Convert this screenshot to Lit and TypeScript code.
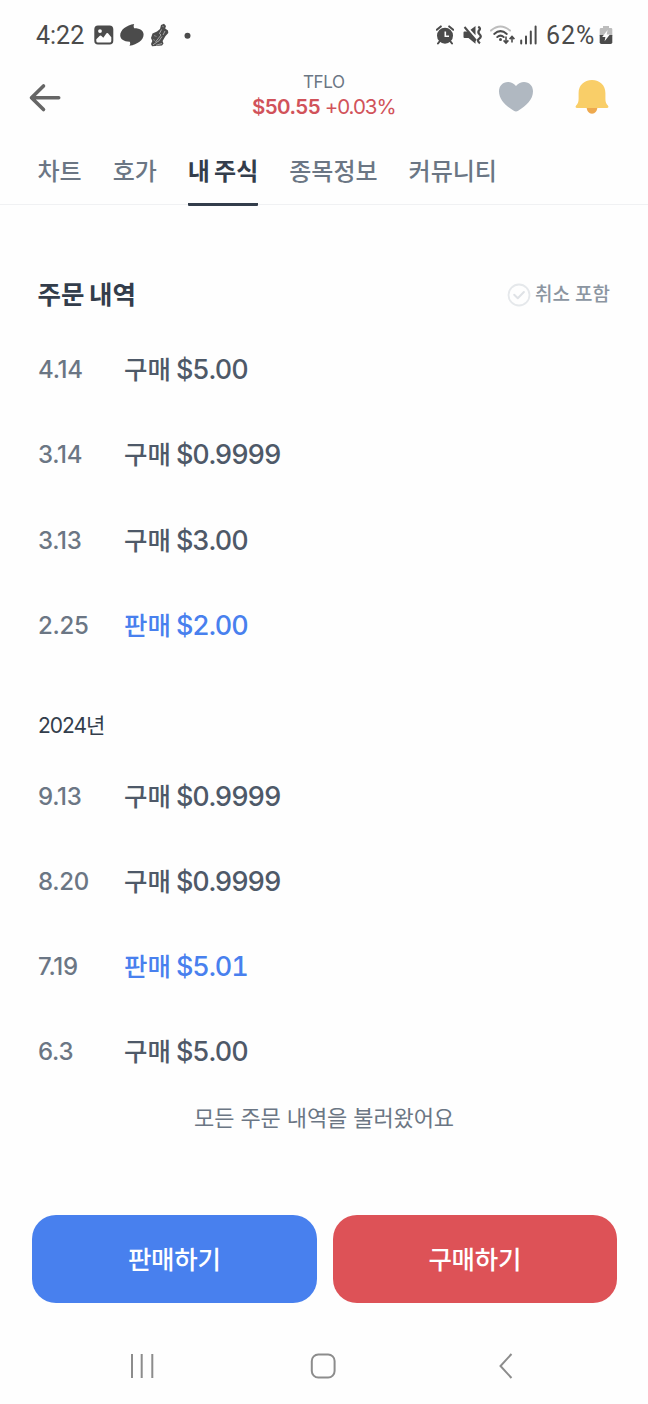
import { LitElement, html, css } from "lit";
import { customElement, property } from "lit/decorators.js";
import { classMap } from "lit/directives/class-map.js";

interface Order {
  date: string;
  side: "buy" | "sell";
  amount: string;
}

const THIS_YEAR: Order[] = [
  { date: "4.14", side: "buy", amount: "$5.00" },
  { date: "3.14", side: "buy", amount: "$0.9999" },
  { date: "3.13", side: "buy", amount: "$3.00" },
  { date: "2.25", side: "sell", amount: "$2.00" },
];

const LAST_YEAR: Order[] = [
  { date: "9.13", side: "buy", amount: "$0.9999" },
  { date: "8.20", side: "buy", amount: "$0.9999" },
  { date: "7.19", side: "sell", amount: "$5.01" },
  { date: "6.3", side: "buy", amount: "$5.00" },
];

const TABS = ["차트", "호가", "내 주식", "종목정보", "커뮤니티"];

@customElement("status-bar")
class StatusBar extends LitElement {
  static styles = css`
    :host {
      display: flex;
      justify-content: space-between;
      align-items: center;
      height: 70px;
      flex-shrink: 0;
      padding: 0 35px 0 36px;
      box-sizing: border-box;
      color: #4b4b4b;
      font: 400 25px/28px Roboto, sans-serif;
    }
    .group { display: flex; align-items: center; }
    svg { display: block; fill: #4b4b4b; flex-shrink: 0; }
    .time, .percent { padding-top: 2px; }
    .time { width: 58px; letter-spacing: 0; }
    .percent { width: 53px; letter-spacing: 0.9px; }
    .picture { margin-right: 6px; }
    .blob { margin-right: 6px; }
    .shoe { margin-right: 15px; }
    .alarm { margin-right: 9px; }
    .mute { margin-right: 8px; }
    .wifi { margin-right: 4px; }
    .signal { margin-right: 9px; }
  `;

  render() {
    return html`
      <div class="group">
        <span class="time">4:22</span>
        <svg class="picture" width="20" height="20" viewBox="0 0 20 20">
          <path fill-rule="evenodd" d="M4 .5H15.500Q19.300.5 19.300 4.300V15.700Q19.300 19.500 15.500 19.500H4Q.3 19.500.3 15.700V4.300Q.3.5 4 .5ZM2.300 14.300V16Q2.300 17.600 4 17.600H15.600Q17.300 17.600 17.300 16V12.300L14 8.300Q13.300 7.500 12.500 8.300L9.300 12.800L7.200 10.700Q6.500 10.100 5.800 10.700ZM6 4.200A1.900 1.900 0 1 0 6 8A1.900 1.900 0 1 0 6 4.200Z"/>
        </svg>
        <svg class="blob" width="24" height="24" viewBox="0 0 24 24">
          <path d="M14.200 1C13.500 2.500 13.500 4 14.200 5.200C20.500 5.200 23.600 7.800 23.600 11.500C23.600 17 17.500 21.500 9.500 22.800C10.300 21.300 10.400 19.900 9.800 18.700C3.500 18.700.2 16 .2 12.300C.2 6.800 6.500 2.200 14.200 1Z"/>
        </svg>
        <svg class="shoe" width="19" height="24" viewBox="0 0 19 24">
          <path d="M11 2L14 .7L16 3L15.200 5.500L18 7.500L18.300 10L15.500 13L12.600 18L13.500 20.500L12 22.500L2 23.200L1 21L2.300 18L1 15L2.500 10.500L7 8.500L10 6Z"/>
          <path d="M11.500 6.500L9.500 10.500L11 12L5.500 19M15 8L13 12M8.500 18.500L12 13.500M3 21.800L8.500 18M6 22.300L12 20.500" fill="none" stroke="#bdbdbd" stroke-width=".8"/>
          <path d="M4 12.500L6.500 13.500M3 16.500L5 17.500M12 3L14 4" fill="none" stroke="#8d8d8d" stroke-width=".9"/>
        </svg>
        <svg width="7" height="7" viewBox="0 0 7 7"><circle cx="3.500" cy="3.700" r="3"/></svg>
      </div>
      <div class="group">
        <svg class="alarm" width="18" height="20" viewBox="0 0 18 20">
          <path d="M.8 4.800L4.800 1.400M17.200 4.800L13.200 1.400M3.500 16.500L2 18.500M14.500 16.500L16 18.500" stroke="#4b4b4b" stroke-width="2" stroke-linecap="round"/>
          <circle cx="9" cy="10.700" r="8"/>
          <path d="M9.300 6.500V11.200H13" fill="none" stroke="#fefefe" stroke-width="1.600"/>
        </svg>
        <svg class="mute" width="19" height="20" viewBox="0 0 19 20">
          <path d="M7.500 4.700L12.500 1V10.200Z"/>
          <path d="M1.500 6.500H4.500L12.500 14.500V18.800L5.500 13H1.500Q.5 13 .5 12V7.500Q.5 6.500 1.500 6.500Z"/>
          <path d="M1.500 2L13 15.500" stroke="#4b4b4b" stroke-width="2"/>
          <path d="M15.200 1.800Q18 3.200 16.200 5.300T16.700 9.500T16.200 13.700T17 18.200" fill="none" stroke="#4b4b4b" stroke-width="2.300"/>
        </svg>
        <svg class="wifi" width="26" height="20" viewBox="0 0 26 20">
          <g fill="none" stroke="#4b4b4b" stroke-width="2" stroke-linecap="round">
            <path d="M1 5.600Q10.500-2.500 20 5.600" stroke="#bdbdbd"/>
            <path d="M4.200 8.900Q10.500 3.400 16.800 8.900M7.300 12Q10.500 9.300 13.700 12"/>
          </g>
          <circle cx="10.500" cy="14.600" r="1.500"/>
          <path d="M16 11.500V17.500M13.600 15.400L16 18L18.400 15.400M22 17.500V12M19.600 14.100L22 11.500L24.400 14.100" fill="none" stroke="#4b4b4b" stroke-width="1.600"/>
        </svg>
        <svg class="signal" width="17" height="20" viewBox="0 0 17 20">
          <path d="M1.200 15.500V18.500M6 11.500V18.500M10.800 6.500V18.500M15.600 1.500V18.500" stroke="#4b4b4b" stroke-width="2" stroke-linecap="round"/>
        </svg>
        <span class="percent">62%</span>
        <svg width="14" height="20" viewBox="0 0 14 20">
          <path d="M4 1H10V3H12Q13.300 3 13.300 4.300V11H.7V4.300Q.7 3 2 3H4Z" fill="#bdbdbd"/>
          <path d="M.7 10H13.300V17.300Q13.300 19 11.600 19H2.400Q.7 19 .7 17.300Z"/>
          <path d="M8.600 5L3.200 11.900H6.400L5.600 16.300L10.900 9.600H7.700Z" fill="#fefefe"/>
        </svg>
      </div>
    `;
  }
}

@customElement("order-row")
class OrderRow extends LitElement {
  @property({ attribute: false }) order!: Order;

  static styles = css`
    :host {
      display: flex;
      align-items: center;
      height: 85.25px;
      font-family: Inter, "Noto Sans CJK KR", sans-serif;
      font-weight: 500;
    }
    .date {
      width: 86px;
      font-size: 24px;
      line-height: 32px;
      color: #6b7684;
      letter-spacing: -0.3px;
    }
    .entry {
      display: flex;
      align-items: baseline;
      gap: 5px;
      color: #4e5968;
      line-height: 36px;
    }
    .sell { color: #4880ee; }
    .side { font-size: 25.500px; }
    .amount { font-size: 27px; letter-spacing: -1.1px; font-variant-numeric: tabular-nums; }
  `;

  render() {
    const { date, side, amount } = this.order;
    return html`
      <span class="date">${date}</span>
      <span class=${classMap({ entry: true, sell: side === "sell" })}>
        <span class="side">${side === "sell" ? "판매" : "구매"}</span>
        <span class="amount">${amount}</span>
      </span>
    `;
  }
}

@customElement("app-root")
class AppRoot extends LitElement {
  static styles = css`
    :host {
      display: flex;
      flex-direction: column;
      height: 1404px;
      background: #fefefe;
      overflow: hidden;
      font-family: Inter, "Noto Sans CJK KR", sans-serif;
      color: #333d4b;
    }
    :host > * { flex-shrink: 0; }
    .header {
      display: grid;
      grid-template-columns: 1fr auto 1fr;
      align-items: center;
      height: 54px;
      padding: 0 39.500px 0 28px;
    }
    svg { display: block; }
    .back { margin-top: 1px; }
    .quote { text-align: center; margin-left: 11px; padding-bottom: 4px; }
    .ticker { font-size: 17px; line-height: 24px; color: #6b7684; letter-spacing: -0.4px; }
    .price { font-size: 20.500px; line-height: 26px; color: #d1525a; letter-spacing: -1.05px; white-space: nowrap; }
    .price b { font-weight: 600; letter-spacing: -0.55px; }
    .actions { display: flex; justify-content: flex-end; align-items: center; gap: 41px; }
    .tabs {
      display: flex;
      gap: 31px;
      height: 81px;
      padding: 0 37.500px;
      box-sizing: border-box;
      border-bottom: 1px solid #f0f1f3;
    }
    .tab {
      display: flex;
      align-items: center;
      height: 82px;
      padding-top: 17px;
      box-sizing: border-box;
      font-size: 24px;
      line-height: 34px;
      font-weight: 500;
      color: #6b7684;
      white-space: nowrap;
      border-bottom: 3px solid transparent;
      word-spacing: -1.500px;
    }
    .tab.active { color: #333d4b; font-weight: 700; border-bottom-color: #333d4b; border-radius: 1px; }
    .section {
      display: flex;
      justify-content: space-between;
      align-items: center;
      height: 40px;
      padding: 0 38px 0 37.500px;
      margin-top: 70px;
    }
    .title { font-size: 25.500px; line-height: 36px; font-weight: 700; word-spacing: -1.500px; }
    .filter { display: flex; align-items: center; gap: 4px; font-size: 19px; line-height: 28px; font-weight: 500; color: #8b95a1; }
    .list { padding: 0 38px; }
    .first { margin-top: 12.500px; }
    .year { padding: 0 38px; height: 32px; line-height: 32px; margin: 41.500px 0 12px; font-size: 21px; letter-spacing: -1px; }
    .done { text-align: center; font-size: 22px; line-height: 32px; color: #6b7684; margin-top: 7px; letter-spacing: -0.1px; }
    .buttons { display: flex; gap: 16px; padding: 0 31px 0 32px; margin-top: 81px; }
    .button {
      flex: 1;
      display: flex;
      align-items: center;
      justify-content: center;
      height: 88px;
      padding-bottom: 3px;
      box-sizing: border-box;
      border-radius: 24px;
      color: #fff;
      font-size: 25.500px;
      font-weight: 500;
      background: #4880ee;
      letter-spacing: -0.3px;
    }
    .buy { background: #dd5257; }
    .nav { display: flex; align-items: center; height: 76px; margin-top: 25px; padding: 0 134px 0 129px; justify-content: space-between; }
    .home { margin-right: 8px; }
  `;

  render() {
    return html`
      <status-bar></status-bar>
      <div class="header">
        <svg class="back" width="34" height="32" viewBox="0 0 34 32">
          <path d="M15.500 4L3.500 15.700L15.500 27.500M3.500 15.700H30.700" fill="none" stroke="#666" stroke-width="3.600" stroke-linecap="round" stroke-linejoin="round"/>
        </svg>
        <div class="quote">
          <div class="ticker">TFLO</div>
          <div class="price"><b>$50.55</b> +0.03%</div>
        </div>
        <div class="actions">
          <svg width="36" height="32" viewBox="0 0 36 32">
            <path d="M18 5.100C20.200 1.900 23.200.9 26 .9C31.300.9 35 4.800 35 10.300C35 18.700 28.200 24.800 20.200 29.800Q18 31 15.800 29.800C7.800 24.800 1 18.700 1 10.300C1 4.800 4.700.9 10 .9C12.800.9 15.800 1.900 18 5.100Z" fill="#b0b8c1"/>
          </svg>
          <svg width="34" height="36" viewBox="0 0 34 36">
            <path d="M11.500 27H22.500C22.500 32 20 34.700 17 34.700S11.500 32 11.500 27Z" fill="#eea94e"/>
            <path d="M17 1C25 1 30.400 6.500 30.400 14V20C30.400 23 31.200 24.800 32.900 26.600C34 28 33.300 29.100 32 29.100H2C.7 29.100 0 28 1.100 26.600C2.800 24.800 3.600 23 3.600 20V14C3.600 6.500 9 1 17 1Z" fill="#f9ce68"/>
          </svg>
        </div>
      </div>
      <div class="tabs">
        ${TABS.map((label, i) => html`<div class=${classMap({ tab: true, active: i === 2 })}>${label}</div>`)}
      </div>
      <div class="section">
        <div class="title">주문 내역</div>
        <div class="filter">
          <svg width="24" height="24" viewBox="0 0 24 24" fill="none">
            <circle cx="12" cy="12" r="10.500" stroke="#e5e8eb" stroke-width="1.800"/>
            <path d="M7.200 11.800L10.800 15.200L16.900 9" stroke="#dfe2e6" stroke-width="2" stroke-linecap="round" stroke-linejoin="round"/>
          </svg>
          <span>취소 포함</span>
        </div>
      </div>
      <div class="list first">${THIS_YEAR.map((o) => html`<order-row .order=${o}></order-row>`)}</div>
      <div class="year">2024년</div>
      <div class="list">${LAST_YEAR.map((o) => html`<order-row .order=${o}></order-row>`)}</div>
      <div class="done">모든 주문 내역을 불러왔어요</div>
      <div class="buttons">
        <div class="button">판매하기</div>
        <div class="button buy">구매하기</div>
      </div>
      <div class="nav">
        <svg width="26" height="26" viewBox="0 0 26 26"><path d="M3 1V25M12.700 1V25M23.300 1V25" stroke="#8c8c8c" stroke-width="2"/></svg>
        <svg class="home" width="26" height="26" viewBox="0 0 26 26"><rect x="1.800" y="1.500" width="22.800" height="23" rx="6.500" fill="none" stroke="#8c8c8c" stroke-width="2"/></svg>
        <svg width="16" height="26" viewBox="0 0 16 26"><path d="M13.500 1L2.500 13L13.500 25" fill="none" stroke="#8c8c8c" stroke-width="2"/></svg>
      </div>
    `;
  }
}
